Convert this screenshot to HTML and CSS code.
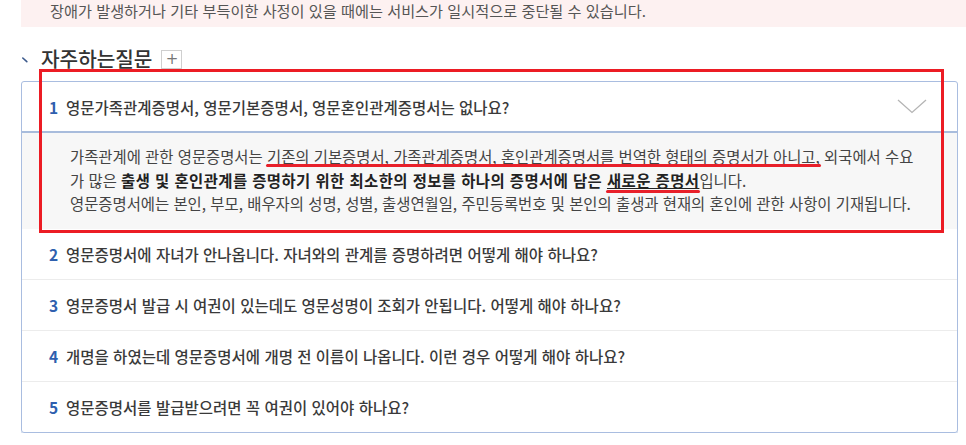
FILE: index.html
```html
<!DOCTYPE html>
<html lang="ko">
<head>
<meta charset="utf-8">
<title>자주하는질문</title>
<link rel="stylesheet" href="styles.css">
</head>
<body>
<div class="notice">장애가 발생하거나 기타 부득이한 사정이 있을 때에는 서비스가 일시적으로 중단될 수 있습니다.</div>

<section class="faq">
  <div class="faq-head">
    <svg class="tick" width="6" height="6" viewBox="0 0 6 6"><path d="M0.8 1 L4.8 4.6" stroke="#3c5a8c" stroke-width="1.6" stroke-linecap="round"/></svg>
    <h2 class="faq-title">자주하는질문</h2>
    <button class="more" type="button">+</button>
  </div>

  <ul class="faq-list">
    <li class="item open">
      <div class="q"><span class="num">1</span><span class="qt">영문가족관계증명서, 영문기본증명서, 영문혼인관계증명서는 없나요?</span>
        <svg class="chev" width="30" height="15" viewBox="0 0 30 15"><polyline points="1,1 15,13.5 29,1" fill="none" stroke="#b4b4b4" stroke-width="1.3"/></svg>
      </div>
      <div class="a">가족관계에 관한 영문증명서는 <span class="u mark">기존의 기본증명서, 가족관계증명서, 혼인관계증명서를 번역한 형태의 증명서가 아니고,</span> 외국에서 수요가 많은 <strong>출생 및 혼인관계를 증명하기 위한 최소한의 정보를 하나의 증명서에 담은 <span class="u mark mark2">새로운 증명서</span></strong>입니다.<br>영문증명서에는 본인, 부모, 배우자의 성명, 성별, 출생연월일, 주민등록번호 및 본인의 출생과 현재의 혼인에 관한 사항이 기재됩니다.</div>
    </li>
    <li class="item"><div class="q"><span class="num">2</span><span class="qt">영문증명서에 자녀가 안나옵니다. 자녀와의 관계를 증명하려면 어떻게 해야 하나요?</span></div></li>
    <li class="item sep"><div class="q"><span class="num">3</span><span class="qt">영문증명서 발급 시 여권이 있는데도 영문성명이 조회가 안됩니다. 어떻게 해야 하나요?</span></div></li>
    <li class="item sep"><div class="q"><span class="num">4</span><span class="qt">개명을 하였는데 영문증명서에 개명 전 이름이 나옵니다. 이런 경우 어떻게 해야 하나요?</span></div></li>
    <li class="item sep"><div class="q"><span class="num">5</span><span class="qt">영문증명서를 발급받으려면 꼭 여권이 있어야 하나요?</span></div></li>
  </ul>

  <div class="annot"></div>
</section>
</body>
</html>
```

FILE: styles.css
```css
* { box-sizing: border-box; }

body {
  margin: 0;
  font-family: "Noto Sans CJK KR", "Noto Sans", sans-serif;
  color: #444;
  background: #fff;
}

.notice {
  margin-left: 21px;
  height: 27px;
  padding-left: 29px;
  background: #fdf1f1;
  font-size: 15.2px;
  line-height: 21px;
  color: #555;
}

.faq {
  position: relative;
  margin-left: 21px;
  width: 937px;
}

.faq-head {
  display: flex;
  align-items: center;
  height: 54px;
  padding-top: 20px;
  padding-bottom: 10px;
}

.tick {
  margin-left: 1px;
  margin-right: 13px;
  margin-top: 2px;
}

.faq-title {
  margin: 0;
  font-size: 20.2px;
  line-height: 24px;
  font-weight: 500;
  color: #333;
}

.more {
  margin-left: 9px;
  width: 21px;
  height: 19px;
  padding: 0;
  border: 1px solid #cfcfcf;
  background: #fff;
  color: #777;
  font-family: "DejaVu Sans", sans-serif;
  font-size: 15px;
  line-height: 16px;
}

.faq-list {
  list-style: none;
  margin: 0;
  padding: 0;
  border: 1px solid #a9bde0;
  border-radius: 3px;
  box-shadow: 0 1px 0 #c9d5ea;
}

.item.sep { border-top: 1px solid #ececec; }

.q {
  display: flex;
  align-items: center;
  height: 50px;
  padding-left: 27px;
  font-size: 15.5px;
  font-weight: 500;
  color: #3a3a3a;
}

.item.open .q {
  height: 51px;
  border-bottom: 2px solid #a8bcdc;
}

.num {
  width: 17px;
  color: #2f5fae;
  font-weight: 700;
}

.chev {
  margin-left: auto;
  margin-right: 30px;
}

.a {
  background: #f7f7f7;
  padding: 12px 37px 13px 48px;
  font-size: 15.4px;
  line-height: 23.5px;
  color: #444;
}

.a strong {
  font-weight: 700;
  color: #222;
  letter-spacing: 0.45px;
}

.u { text-decoration: underline; text-decoration-thickness: 1px; }

.mark { position: relative; }

.mark::after {
  content: "";
  position: absolute;
  left: -1px;
  right: -1px;
  bottom: 0;
  height: 3px;
  border-radius: 2px;
  background: #e8202a;
}

.mark2::after { bottom: -2px; }

.annot {
  position: absolute;
  left: 18px;
  top: 42px;
  width: 905px;
  height: 164px;
  border: 3px solid #ec1c24;
  pointer-events: none;
}
```
